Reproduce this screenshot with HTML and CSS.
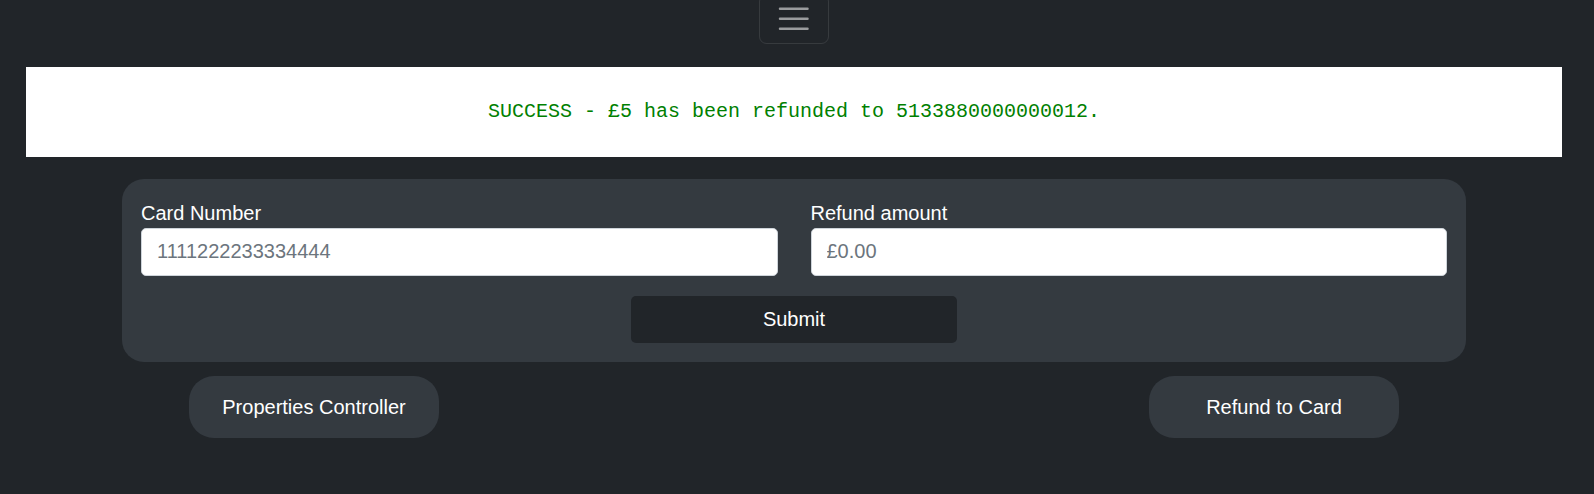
FILE: index.html
```html
<!DOCTYPE html>
<html lang="en">
<head>
<meta charset="utf-8">
<title>Refund to Card</title>
<link rel="stylesheet" href="styles.css">
</head>
<body>
<div class="page">
  <header class="topbar">
    <button class="toggler" type="button" aria-label="Toggle navigation">
      <svg class="toggler-icon" viewBox="0 0 30 30" width="37.5" height="37.5">
        <path d="M4 7h22M4 15h22M4 23h22" stroke="rgba(255,255,255,0.55)" stroke-width="2" stroke-linecap="round" fill="none"/>
      </svg>
    </button>
  </header>

  <div class="alert">SUCCESS - £5 has been refunded to 5133880000000012.</div>

  <form class="card">
    <div class="fields">
      <div class="field">
        <label class="label" for="card">Card Number</label>
        <input class="input" id="card" type="text" placeholder="1111222233334444">
      </div>
      <div class="field">
        <label class="label" for="amount">Refund amount</label>
        <input class="input" id="amount" type="text" placeholder="£0.00">
      </div>
    </div>
    <div class="actions">
      <button class="submit" type="button">Submit</button>
    </div>
  </form>

  <nav class="links">
    <a class="pill">Properties Controller</a>
    <a class="pill">Refund to Card</a>
  </nav>
</div>
</body>
</html>
```

FILE: styles.css
```css
html, body {
  margin: 0;
  padding: 0;
  background: #212529;
}

body {
  font-family: "Liberation Sans", Arial, sans-serif;
  color: #ffffff;
  font-size: 20px;
  line-height: 1.5;
}

.page {
  width: 1588px;
  display: flex;
  flex-direction: column;
  align-items: center;
}

.topbar {
  display: flex;
  justify-content: center;
  width: 100%;
  height: 44px;
}

.toggler {
  margin-top: -6px;
  width: 70px;
  height: 50px;
  padding: 0;
  border: 1.25px solid rgba(255, 255, 255, 0.1);
  border-radius: 7.5px;
  background: transparent;
  display: flex;
  align-items: flex-start;
  justify-content: center;
  padding-top: 5px;
  box-sizing: border-box;
}

.toggler-icon {
  display: block;
}

.alert {
  margin-top: 23px;
  align-self: stretch;
  margin-left: 26px;
  margin-right: 26px;
  height: 90px;
  background: #ffffff;
  color: #008000;
  font-family: "Liberation Mono", "DejaVu Sans Mono", monospace;
  font-size: 20px;
  display: flex;
  align-items: center;
  justify-content: center;
}

.card {
  margin: 22px 0 0;
  width: 1344px;
  box-sizing: border-box;
  background: #343a40;
  border-radius: 22px;
  padding: 19px 19px 19px;
}

.fields {
  display: grid;
  grid-template-columns: 1fr 1fr;
  column-gap: 33px;
}

.field {
  display: flex;
  flex-direction: column;
}

.label {
  display: block;
  height: 30px;
  line-height: 30px;
  color: #ffffff;
}

.input {
  height: 47.5px;
  box-sizing: border-box;
  border: 1.25px solid #ced4da;
  border-radius: 5px;
  background: #ffffff;
  padding: 7.5px 15px;
  font-family: "Liberation Sans", Arial, sans-serif;
  font-size: 20px;
  color: #495057;
  outline: none;
}

.input::placeholder {
  color: #6c757d;
}

.actions {
  display: flex;
  justify-content: center;
  margin-top: 20px;
}

.submit {
  width: 326px;
  height: 47px;
  border: none;
  border-radius: 5px;
  background: #212529;
  color: #ffffff;
  font-family: "Liberation Sans", Arial, sans-serif;
  font-size: 20px;
  padding: 0;
}

.links {
  margin-top: 14px;
  width: 1344px;
  box-sizing: border-box;
  padding: 0 67px;
  display: flex;
  justify-content: space-between;
}

.pill {
  width: 250px;
  height: 62px;
  border-radius: 25px;
  background: #343a40;
  color: #ffffff;
  display: flex;
  align-items: center;
  justify-content: center;
  font-size: 20px;
  text-decoration: none;
}
```
